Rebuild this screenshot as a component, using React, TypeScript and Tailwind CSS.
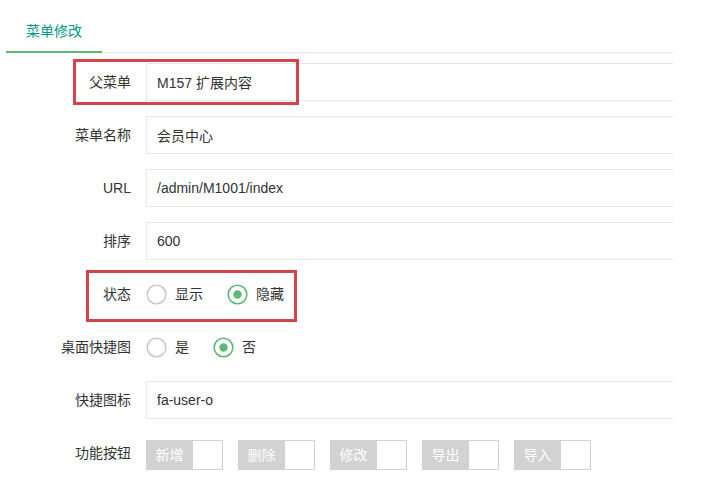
import React from 'react';

const font = { fontFamily: '"Liberation Sans", "Noto Sans CJK SC", sans-serif' };

const Row = ({ label, children }: { label: string; children: React.ReactNode }) => (
  <div className="flex h-[38px] mb-[15px]">
    <label className="w-[140px] shrink-0 pr-[15px] text-right leading-[38px] text-[#333]">{label}</label>
    <div className="flex-1 flex items-center">{children}</div>
  </div>
);

const Input = ({ value }: { value: string }) => (
  <input
    readOnly
    value={value}
    className="h-[38px] w-[560px] shrink-0 border border-[#e6e6e6] bg-white pl-[10px] text-[14px] text-[#333] outline-none"
    style={font}
  />
);

const Radio = ({ text, checked }: { text: string; checked?: boolean }) => (
  <div className="flex items-center mr-[24px]">
    <svg width="21" height="21" viewBox="0 0 21 21" className="mr-[8px]">
      <circle cx="10.5" cy="10.5" r="9.3" fill="none" stroke={checked ? '#5FB878' : '#c9c9c9'} strokeWidth="1.6" />
      {checked && <circle cx="10.5" cy="10.5" r="4.2" fill="#5FB878" />}
    </svg>
    <span className="text-[#333]">{text}</span>
  </div>
);

const Check = ({ text }: { text: string }) => (
  <div className="flex h-[30px] mr-[15px] mt-[4px]">
    <span className="w-[47px] text-center bg-[#d2d2d2] text-white leading-[30px]">{text}</span>
    <i className="w-[30px] border border-l-0 border-[#d2d2d2] bg-white" />
  </div>
);

export default function App() {
  return (
    <div className="w-[702px] h-[480px] bg-white text-[14px] overflow-hidden" style={font}>
      <div className="relative ml-[6px] w-[667px] overflow-hidden pt-[12px]">
        <ul className="flex h-[41px] border-b border-[#e6e6e6]">
          <li className="h-[41px] -mb-px px-[20px] leading-[39px] text-[#009688] border-b-2 border-[#5FB878]">菜单修改</li>
        </ul>

        <form className="mt-[10px]">
          <Row label="父菜单"><Input value="M157 扩展内容" /></Row>
          <Row label="菜单名称"><Input value="会员中心" /></Row>
          <Row label="URL"><Input value="/admin/M1001/index" /></Row>
          <Row label="排序"><Input value="600" /></Row>
          <Row label="状态">
            <Radio text="显示" />
            <Radio text="隐藏" checked />
          </Row>
          <Row label="桌面快捷图">
            <Radio text="是" />
            <Radio text="否" checked />
          </Row>
          <Row label="快捷图标"><Input value="fa-user-o" /></Row>
          <Row label="功能按钮">
            <Check text="新增" />
            <Check text="删除" />
            <Check text="修改" />
            <Check text="导出" />
            <Check text="导入" />
          </Row>
        </form>

        <div className="absolute left-[67px] top-[59px] w-[226px] h-[46px] border-[3px] border-[#d6434a] pointer-events-none" />
        <div className="absolute left-[80px] top-[270px] w-[211px] h-[52px] border-[3px] border-[#d6434a] pointer-events-none" />
      </div>
    </div>
  );
}
